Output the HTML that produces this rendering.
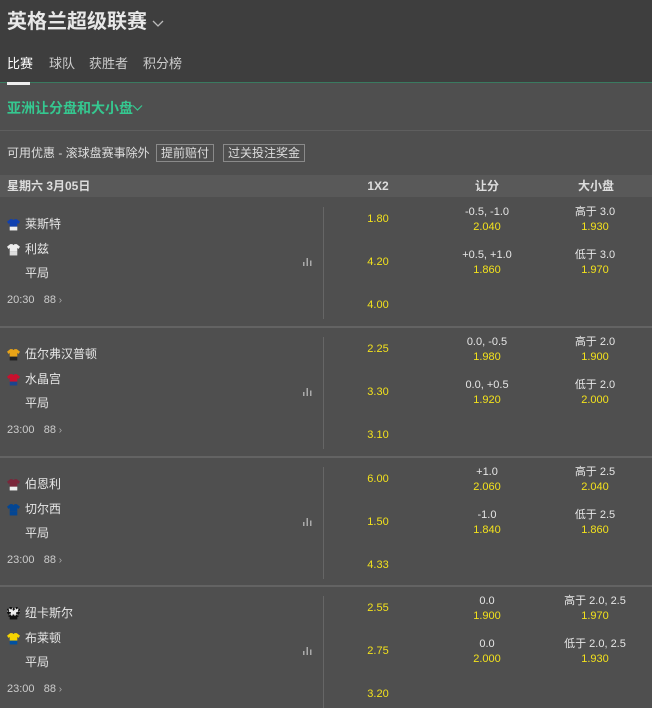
<!DOCTYPE html>
<html><head><meta charset="utf-8"><style>
*{margin:0;padding:0;box-sizing:border-box}
body{width:652px;height:700px;overflow:hidden;background:#4f4f4f;font-family:"Liberation Sans","Noto Sans CJK SC",sans-serif;color:#e6e6e6;position:relative}
.a{position:absolute;white-space:nowrap;line-height:16px}
.c{text-align:center;width:100px}
.y{color:#f3e21c}
.hl{position:absolute;left:0;width:652px;height:1px;background:#656565}
</style></head><body>
<div style="position:absolute;left:0;top:0;width:652px;height:83px;background:#3e3e3e"></div>
<div class="a" style="left:7px;top:10px;font-size:20px;line-height:24px;font-weight:bold;color:#e8e8e8">英格兰超级联赛</div>
<svg class="a" style="left:151px;top:19px" width="14" height="10"><path d="M2 2 L7 7 L12 2" stroke="#bbb" stroke-width="1.3" fill="none"/></svg>
<div class="a" style="left:7px;top:56px;font-size:13px;color:#fff">比赛</div>
<div class="a" style="left:49px;top:56px;font-size:13px;color:#ccc">球队</div>
<div class="a" style="left:89px;top:56px;font-size:13px;color:#ccc">获胜者</div>
<div class="a" style="left:143px;top:56px;font-size:13px;color:#ccc">积分榜</div>
<div style="position:absolute;left:0;top:82px;width:652px;height:1px;background:#3a7a60"></div>
<div style="position:absolute;left:7px;top:82px;width:23px;height:3px;background:#eee"></div>
<div class="a" style="left:7px;top:100px;font-size:14px;font-weight:bold;color:#35c890">亚洲让分盘和大小盘</div>
<svg class="a" style="left:132px;top:104px" width="12" height="8"><path d="M1 1.5 L5.5 6 L10 1.5" stroke="#35c890" stroke-width="1.2" fill="none"/></svg>
<div class="hl" style="top:130px;background:#5e5e5e"></div>
<div class="a" style="left:7px;top:145px;font-size:12px;color:#ddd">可用优惠 - 滚球盘赛事除外</div>
<div class="a" style="left:156px;top:144px;font-size:12px;color:#ddd;border:1px solid #8a8a8a;padding:0 4px;line-height:16px">提前赔付</div>
<div class="a" style="left:223px;top:144px;font-size:12px;color:#ddd;border:1px solid #8a8a8a;padding:0 4px;line-height:16px">过关投注奖金</div>
<div style="position:absolute;left:0;top:175px;width:652px;height:22px;background:#595959"></div>
<div class="a" style="left:7px;top:178px;font-size:12px;font-weight:bold;color:#ddd">星期六 3月05日</div>
<div class="a c" style="left:328px;top:178px;font-size:12px;font-weight:bold;color:#ddd">1X2</div>
<div class="a c" style="left:437px;top:178px;font-size:12px;font-weight:bold;color:#ddd">让分</div>
<div class="a c" style="left:546px;top:178px;font-size:12px;font-weight:bold;color:#ddd">大小盘</div>
<div id="m"></div>
<script>
function shirt(b,s){return '<svg width="13" height="13" viewBox="0 0 12 12"><path d="M3 1 L5 1 L6 2 L7 1 L9 1 L12 3.5 L10.5 5.5 L9.5 4.5 L9.5 8 L2.5 8 L2.5 4.5 L1.5 5.5 L0 3.5Z" fill="'+b+'"/><rect x="2.5" y="8" width="7" height="3.5" fill="'+s+'"/></svg>';}
var M=[
[197,'莱斯特','利兹',shirt('#1040b0','#eee'),shirt('#eee','#ddd'),'20:30',['1.80','4.20','4.00'],['-0.5, -1.0','2.040','+0.5, +1.0','1.860'],['高于 3.0','1.930','低于 3.0','1.970']],
[327,'伍尔弗汉普顿','水晶宫',shirt('#e8a317','#222'),shirt('#c8102e','#1b458f'),'23:00',['2.25','3.30','3.10'],['0.0, -0.5','1.980','0.0, +0.5','1.920'],['高于 2.0','1.900','低于 2.0','2.000']],
[457,'伯恩利','切尔西',shirt('#7a263a','#eee'),shirt('#034694','#034694'),'23:00',['6.00','1.50','4.33'],['+1.0','2.060','-1.0','1.840'],['高于 2.5','2.040','低于 2.5','1.860']],
[586,'纽卡斯尔','布莱顿',shirt('#eee','#111').replace('fill="#eee"','fill="#eee" stroke="#111" stroke-width="2.2" stroke-dasharray="1.5 1.5"'),shirt('#f5d400','#0050a0'),'23:00',['2.55','2.75','3.20'],['0.0','1.900','0.0','2.000'],['高于 2.0, 2.5','1.970','低于 2.0, 2.5','1.930']]];
var h='';
M.forEach(function(m,i){var t=m[0];
if(i>0)h+='<div class="hl" style="top:'+(t-1)+'px;height:2px;background:#636363"></div>';
h+='<div class="a" style="left:7px;top:'+(t+21)+'px">'+m[3]+'</div><div class="a" style="left:25px;top:'+(t+19)+'px;font-size:12px">'+m[1]+'</div>';
h+='<div class="a" style="left:7px;top:'+(t+46)+'px">'+m[4]+'</div><div class="a" style="left:25px;top:'+(t+44)+'px;font-size:12px">'+m[2]+'</div>';
h+='<div class="a" style="left:25px;top:'+(t+68)+'px;font-size:12px">平局</div>';
h+='<div class="a" style="left:7px;top:'+(t+95)+'px;font-size:11px;color:#ccc">'+m[5]+'&nbsp;&nbsp; 88<span style="font-size:10px;color:#aaa"> ›</span></div>';
h+='<svg class="a" style="left:303px;top:'+(t+61)+'px" width="10" height="8"><rect x="0" y="4" width="1.5" height="4" fill="#aaa"/><rect x="3.5" y="0" width="1.5" height="8" fill="#aaa"/><rect x="7" y="2.5" width="1.5" height="5.5" fill="#aaa"/></svg>';
h+='<div style="position:absolute;left:323px;top:'+(t+10)+'px;width:1px;height:112px;background:#666"></div>';
[14,57,100].forEach(function(d,k){h+='<div class="a c y" style="left:328px;top:'+(t+d)+'px;font-size:11px">'+m[6][k]+'</div>';});
var o=[7,22,50,65];
for(var k=0;k<4;k++){var cls=k%2?' y':'';
h+='<div class="a c'+cls+'" style="left:437px;top:'+(t+o[k])+'px;font-size:11px">'+m[7][k]+'</div>';
h+='<div class="a c'+cls+'" style="left:545px;top:'+(t+o[k])+'px;font-size:11px">'+m[8][k]+'</div>';}
});
document.getElementById('m').innerHTML=h;
</script>
</body></html>
